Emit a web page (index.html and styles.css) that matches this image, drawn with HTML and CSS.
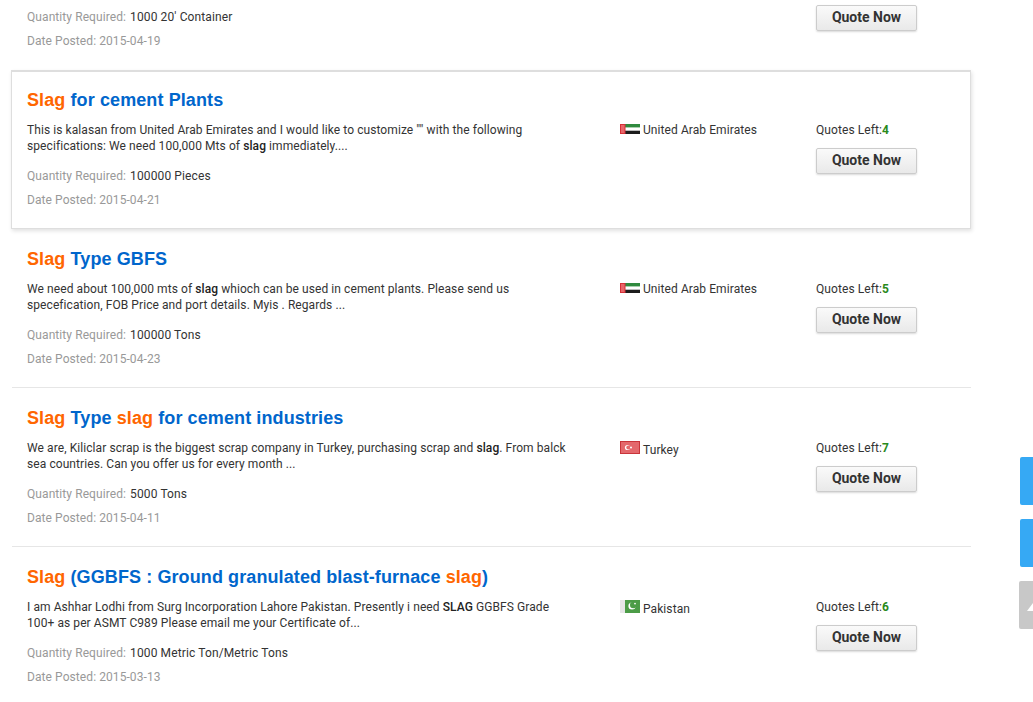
FILE: index.html
```html
<!DOCTYPE html>
<html lang="en">
<head>
<meta charset="utf-8">
<title>Slag buying requests</title>
<link rel="stylesheet" href="styles.css">
</head>
<body>
<main class="list">
  <article class="row row-partial">
    <div class="main">
      <p class="meta">Quantity Required: <span>1000 20' Container</span></p>
      <p class="meta">Date Posted: 2015-04-19</p>
    </div>
    <div class="country"></div>
    <div class="action">
      <button class="quote">Quote Now</button>
    </div>
  </article>

  <article class="row active">
    <div class="main">
      <h2 class="title"><em>Slag</em> for cement Plants</h2>
      <p class="desc">This is kalasan from United Arab Emirates and I would like to customize "" with the following specifications: We need 100,000 Mts of <b>slag</b> immediately....</p>
      <p class="meta">Quantity Required: <span>100000 Pieces</span></p>
      <p class="meta">Date Posted: 2015-04-21</p>
    </div>
    <div class="country">
      <svg class="flag" viewBox="0 0 20 10"><rect width="20" height="10" fill="#fff"/><rect x="5" width="15" height="3" fill="#2f8a3e"/><rect x="5" y="7" width="15" height="3" fill="#1c1c1c"/><rect x="5" y="3" width="15" height="1" fill="#a9cfae"/><rect x="5" y="6" width="15" height="1" fill="#bbb"/><rect width="5" height="10" fill="#e8666a"/><rect x=".5" y=".5" width="4.5" height="9" fill="none" stroke="#d63138"/></svg>
      <span>United Arab Emirates</span>
    </div>
    <div class="action">
      <div class="left">Quotes Left:<b>4</b></div>
      <button class="quote">Quote Now</button>
    </div>
  </article>

  <article class="row">
    <div class="main">
      <h2 class="title"><em>Slag</em> Type GBFS</h2>
      <p class="desc">We need about 100,000 mts of <b>slag</b> whioch can be used in cement plants. Please send us specefication, FOB Price and port details. Myis . Regards ...</p>
      <p class="meta">Quantity Required: <span>100000 Tons</span></p>
      <p class="meta">Date Posted: 2015-04-23</p>
    </div>
    <div class="country">
      <svg class="flag" viewBox="0 0 20 10"><rect width="20" height="10" fill="#fff"/><rect x="5" width="15" height="3" fill="#2f8a3e"/><rect x="5" y="7" width="15" height="3" fill="#1c1c1c"/><rect x="5" y="3" width="15" height="1" fill="#a9cfae"/><rect x="5" y="6" width="15" height="1" fill="#bbb"/><rect width="5" height="10" fill="#e8666a"/><rect x=".5" y=".5" width="4.5" height="9" fill="none" stroke="#d63138"/></svg>
      <span>United Arab Emirates</span>
    </div>
    <div class="action">
      <div class="left">Quotes Left:<b>5</b></div>
      <button class="quote">Quote Now</button>
    </div>
  </article>

  <article class="row">
    <div class="main">
      <h2 class="title"><em>Slag</em> Type <em>slag</em> for cement industries</h2>
      <p class="desc">We are, Kiliclar scrap is the biggest scrap company in Turkey, purchasing scrap and <b>slag</b>. From balck sea countries. Can you offer us for every month ...</p>
      <p class="meta">Quantity Required: <span>5000 Tons</span></p>
      <p class="meta">Date Posted: 2015-04-11</p>
    </div>
    <div class="country country-low">
      <svg class="flag" viewBox="0 0 20 13"><rect width="20" height="13" fill="#e4686c"/><rect x=".5" y=".5" width="19" height="12" fill="none" stroke="#c9343a"/><circle cx="7.5" cy="6.5" r="2.6" fill="#fff"/><circle cx="8.3" cy="6.5" r="2" fill="#e4686c"/><circle cx="11" cy="6.5" r="1" fill="#fff"/></svg>
      <span>Turkey</span>
    </div>
    <div class="action">
      <div class="left">Quotes Left:<b>7</b></div>
      <button class="quote">Quote Now</button>
    </div>
  </article>

  <article class="row">
    <div class="main">
      <h2 class="title"><em>Slag</em> (GGBFS : Ground granulated blast-furnace <em>slag</em>)</h2>
      <p class="desc">I am Ashhar Lodhi from Surg Incorporation Lahore Pakistan. Presently i need <b>SLAG</b> GGBFS Grade 100+ as per ASMT C989 Please email me your Certificate of...</p>
      <p class="meta">Quantity Required: <span>1000 Metric Ton/Metric Tons</span></p>
      <p class="meta">Date Posted: 2015-03-13</p>
    </div>
    <div class="country country-low">
      <svg class="flag" viewBox="0 0 20 13"><rect width="20" height="13" fill="#4c9c47"/><rect width="5" height="13" fill="#e6e6e6"/><circle cx="12" cy="6" r="3.6" fill="#fff"/><circle cx="13.3" cy="5" r="3.3" fill="#4c9c47"/><circle cx="15" cy="3.6" r=".9" fill="#fff"/></svg>
      <span>Pakistan</span>
    </div>
    <div class="action">
      <div class="left">Quotes Left:<b>6</b></div>
      <button class="quote">Quote Now</button>
    </div>
  </article>
</main>

<aside class="side">
  <a class="tab" href="#" aria-label="Contact"></a>
  <a class="tab" href="#" aria-label="Feedback"></a>
  <a class="tab top" href="#" aria-label="Back to top"></a>
</aside>
</body>
</html>
```

FILE: styles.css
```css
* { box-sizing: border-box; }

html, body {
  height: 702px;
  overflow: hidden;
}

body {
  margin: 0;
  background: #fff;
  color: #333;
  font: 12px/16px Roboto, "Liberation Sans", sans-serif;
  letter-spacing: .08px;
}

.list {
  width: 959px;
  margin-left: 12px;
}

.row {
  display: grid;
  grid-template-columns: 593px 196px 1fr;
  height: 159px;
  padding: 20px 15px 0;
  border-bottom: 1px solid #e6e6e6;
}

.row-partial {
  height: 70px;
  padding-top: 0;
  border-bottom: 0;
}

.row-partial .main { padding-top: 9px; }

.row-partial .action { padding-top: 5px; }

.row.active {
  margin-left: -1px;
  border: 1px solid #dedede;
  border-top-width: 2px;
  padding: 18px 14px 0 15px;
  box-shadow: 1px 2px 4px rgba(0, 0, 0, .12);
}

.main { width: 545px; }

.title {
  margin: 0 0 11px;
  font: bold 18px/21px "Liberation Sans", Arial, sans-serif;
  letter-spacing: .1px;
  color: #0066cc;
}

.title em {
  font-style: normal;
  color: #ff6600;
}

.desc { margin: 0 0 14px; }

.desc b { font-weight: 500; color: #222; }

.meta {
  margin: 0 0 8px;
  color: #999;
}

.meta span {
  margin-left: 1px;
  letter-spacing: .12px;
  color: #333;
}

.country {
  display: flex;
  align-items: flex-start;
  gap: 3px;
  padding-top: 32px;
}

.flag {
  width: 20px;
  height: 10px;
  margin-top: 2px;
  flex: none;
}

.country-low .flag {
  height: 13px;
  margin-top: 1px;
}

.country-low span { margin-top: 2px; }

.action { padding-top: 32px; }

.left { margin-bottom: 10px; }

.left b {
  font-weight: 700;
  color: #2a8a1c;
}

.quote {
  display: block;
  width: 101px;
  height: 26px;
  padding: 0 0 2px;
  border: 1px solid #ccc;
  border-radius: 2px;
  background: linear-gradient(#fafafa, #e9e9e9);
  box-shadow: 0 1px 2px rgba(0, 0, 0, .15);
  color: #333;
  font: 700 14px/20px Roboto, "Liberation Sans", sans-serif;
}

.side {
  position: fixed;
  top: 457px;
  right: 0;
  display: flex;
  flex-direction: column;
  gap: 14px;
}

.tab {
  display: block;
  position: relative;
  align-self: flex-end;
  width: 13px;
  height: 48px;
  background: #36a9f4;
  border-radius: 2px 0 0 2px;
}

.tab.top {
  width: 14px;
  background: #c8c8c8;
}

.tab.top::after {
  content: "";
  position: absolute;
  right: 0;
  top: 22px;
  border-style: solid;
  border-width: 0 0 8px 6px;
  border-color: transparent transparent #fff transparent;
}
```
